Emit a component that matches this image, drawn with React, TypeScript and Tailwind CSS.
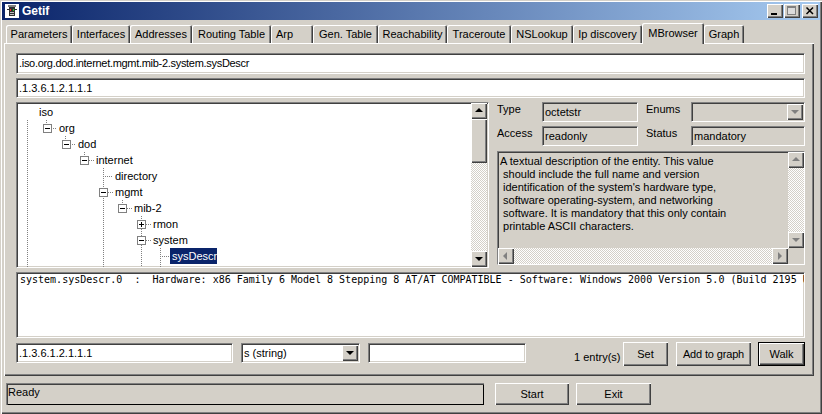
const sunken = "border border-t-[#808080] border-l-[#808080] border-r-white border-b-white shadow-[inset_1px_1px_0_#404040,inset_-1px_-1px_0_#d4d0c8]";
const raised = "shadow-[inset_1px_1px_0_#ffffff,inset_-1px_-1px_0_#404040,inset_-2px_-2px_0_#808080]";
const dither = "bg-[repeating-conic-gradient(#ffffff_0_25%,#d4d0c8_0_50%)] bg-[length:2px_2px]";

const tabs: [string, number][] = [
  ["Parameters", 66], ["Interfaces", 58], ["Addresses", 62], ["Routing Table", 79], ["Arp", 42],
  ["Gen. Table", 65], ["Reachability", 69], ["Traceroute", 64], ["NSLookup", 62], ["Ip discovery", 69],
  ["MBrowser", 62], ["Graph", 40],
];

function Arrow({ dir, gray }: { dir: "up" | "down" | "left" | "right"; gray?: boolean }) {
  const pts = { up: "4,1 0,5 8,5", down: "0,2 8,2 4,6", left: "5,0 5,8 1,4", right: "2,0 2,8 6,4" }[dir];
  return (
    <svg width="8" height="8" viewBox="0 0 8 8">
      <polygon points={pts} fill={gray ? "#808080" : "#000000"} />
    </svg>
  );
}

function ScrollBtn({ dir, gray, className = "" }: { dir: "up" | "down" | "left" | "right"; gray?: boolean; className?: string }) {
  return (
    <div className={`w-4 h-4 shrink-0 bg-[#d4d0c8] flex items-center justify-center ${raised} ${className}`}>
      <Arrow dir={dir} gray={gray} />
    </div>
  );
}

function Box({ sign }: { sign: "+" | "-" }) {
  return (
    <svg width="9" height="9" viewBox="0 0 9 9" className="block shrink-0">
      <rect x="0.5" y="0.5" width="8" height="8" fill="#fff" stroke="#808080" />
      <line x1="2" y1="4.5" x2="7" y2="4.5" stroke="#000" />
      {sign === "+" && <line x1="4.5" y1="2" x2="4.5" y2="7" stroke="#000" />}
    </svg>
  );
}

const nodes: { label: string; x: number; box?: "+" | "-"; sel?: boolean }[] = [
  { label: "iso", x: 21 },
  { label: "org", x: 41, box: "-" },
  { label: "dod", x: 60, box: "-" },
  { label: "internet", x: 78, box: "-" },
  { label: "directory", x: 97 },
  { label: "mgmt", x: 97, box: "-" },
  { label: "mib-2", x: 116, box: "-" },
  { label: "rmon", x: 135, box: "+" },
  { label: "system", x: 135, box: "-" },
  { label: "sysDescr", x: 154, sel: true },
];

function TreeLines() {
  const d = "#808080";
  const v = (x: number, a: number, b: number) => <line key={`v${x}-${a}`} x1={x + 0.5} y1={a} x2={x + 0.5} y2={b} stroke={d} strokeDasharray="1 1" />;
  const h = (a: number, b: number, y: number) => <line key={`h${a}-${y}`} x1={a} y1={y + 0.5} x2={b} y2={y + 0.5} stroke={d} strokeDasharray="1 1" />;
  return (
    <svg width="190" height="164" className="absolute left-0 top-0 pointer-events-none">
      {v(10, 17, 164)}
      {v(29, 17, 21)}{h(34, 39, 25)}
      {v(48, 33, 37)}{h(53, 58, 41)}
      {v(67, 49, 53)}{h(72, 77, 57)}
      {v(86, 65, 164)}{h(86, 96, 73)}{h(91, 96, 89)}
      {v(105, 97, 101)}{h(110, 115, 105)}
      {v(124, 113, 117)}{h(129, 134, 121)}{v(124, 126, 133)}{h(129, 134, 137)}
      {v(124, 142, 164)}
      {v(143, 145, 164)}{h(143, 153, 153)}
    </svg>
  );
}

function Tree() {
  return (
    <div className={`relative w-[473px] h-[166px] shrink-0 bg-white flex overflow-hidden ${sunken}`}>
      <div className="relative flex-1 overflow-hidden pl-px pt-px">
        <TreeLines />
        {nodes.map((n) => (
          <div key={n.label} className="relative h-4 flex items-center" style={{ paddingLeft: n.x }}>
            {n.box && <span className="absolute" style={{ left: n.x - 17 + 1 }}><Box sign={n.box} /></span>}
            <span className={n.sel ? "bg-[#0a246a] text-white px-[2px] h-4 leading-4 -ml-[2px] w-[47px]" : "leading-4"}>{n.label}</span>
          </div>
        ))}
      </div>
      <div className={`w-4 h-full mr-px flex flex-col shrink-0 ${dither}`}>
        <ScrollBtn dir="up" />
        <div className={`w-4 h-[44px] bg-[#d4d0c8] ${raised}`} />
        <div className="flex-1" />
        <ScrollBtn dir="down" />
      </div>
    </div>
  );
}

function Field({ label, value, w }: { label: string; value: string; w: number }) {
  return (
    <div className="flex items-start">
      <span className="leading-4 -mt-px w-[45px]">{label}</span>
      <div className={`h-[20px] px-[2px] leading-[19px] ${sunken}`} style={{ width: w }}>{value}</div>
    </div>
  );
}

const btn = `h-[24px] bg-[#d4d0c8] flex items-center justify-center shrink-0 ${raised}`;

export default function App() {
  return (
    <div className="w-[822px] h-[414px] overflow-hidden bg-[#d4d0c8] text-black text-[11px] flex flex-col pt-[2px] px-[2px] font-['Liberation_Sans',Arial,sans-serif] shadow-[inset_1px_1px_0_#d4d0c8,inset_2px_2px_0_#ffffff,inset_-1px_-1px_0_#404040,inset_-2px_-2px_0_#808080]">
      <div className="h-[18px] shrink-0 flex items-center justify-between bg-[linear-gradient(90deg,#0a246a,#a6caf0)] pl-[3px] pr-[2px]">
        <div className="flex items-center gap-[3px]">
          <svg width="14" height="14" viewBox="0 0 14 14">
            <rect x="0" y="0" width="14" height="14" fill="#ffffff" />
            <rect x="3" y="1" width="8" height="2" fill="#808080" />
            <rect x="4" y="3" width="6" height="9" fill="#303030" />
            <rect x="2" y="5" width="10" height="1" fill="#303030" />
            <rect x="5" y="5" width="1" height="2" fill="#ff2020" />
            <rect x="8" y="5" width="1" height="2" fill="#20d020" />
            <rect x="5" y="8" width="4" height="1" fill="#c0c0c0" />
            <rect x="5" y="10" width="4" height="1" fill="#c0c0c0" />
          </svg>
          <span className="text-white font-bold text-[12px] leading-4">Getif</span>
        </div>
        <div className="flex items-center">
          <div className={`w-4 h-[14px] bg-[#d4d0c8] relative flex items-center justify-center ${raised}`}>
            <svg width="10" height="10" viewBox="0 0 10 10"><rect x="1" y="7" width="6" height="2" fill="#000" /></svg>
          </div>
          <div className={`w-4 h-[14px] ml-px bg-[#d4d0c8] flex items-center justify-center ${raised}`}>
            <svg width="10" height="10" viewBox="0 0 10 10"><rect x="0.5" y="0.5" width="8" height="8" fill="#dcdcdc" stroke="#808080" /><rect x="1" y="1" width="7" height="1" fill="#808080" /></svg>
          </div>
          <div className={`w-4 h-[14px] ml-[2px] bg-[#d4d0c8] flex items-center justify-center ${raised}`}>
            <svg width="10" height="10" viewBox="0 0 10 10"><path d="M1.5 1.5L8 8M8 1.5L1.5 8" stroke="#000" strokeWidth="1.5" /></svg>
          </div>
        </div>
      </div>

      <div className="flex items-end h-[21px] pl-1 mt-[2px] shrink-0 relative z-10">
        {tabs.map(([t, w]) => {
          const active = t === "MBrowser";
          return (
            <div
              key={t}
              className={`shrink-0 bg-[#d4d0c8] rounded-t-[2px] shadow-[inset_1px_1px_0_#ffffff,inset_-1px_0_0_#404040,inset_-2px_0_0_#808080] flex ${t === "Arp" ? "justify-start pl-[5px]" : "justify-center"} ${active ? "h-[21px] leading-[20px] -mb-px" : "h-[18px] leading-[18px]"}`}
              style={{ width: w }}
            >
              {t}
            </div>
          );
        })}
      </div>

      <div className="w-[810px] h-[333px] ml-[2px] shrink-0 pl-[12px] pr-[9px] pt-[10px] flex flex-col shadow-[inset_1px_1px_0_#ffffff,inset_-1px_-1px_0_#404040,inset_-2px_-2px_0_#808080]">
        <div className={`h-[21px] w-[789px] bg-white px-[2px] leading-[19px] tracking-[-0.3px] shrink-0 ${sunken}`}>.iso.org.dod.internet.mgmt.mib-2.system.sysDescr</div>
        <div className={`h-[20px] w-[789px] mt-[4px] bg-white px-[2px] leading-[18px] shrink-0 ${sunken}`}>.1.3.6.1.2.1.1.1</div>
        <div className="flex mt-[4px] shrink-0">
          <Tree />
          <div className="w-[308px] ml-[8px] flex flex-col shrink-0">
            <div className="flex gap-[8px]">
              <Field label="Type" value="octetstr" w={96} />
              <div className="flex items-start">
                <span className="leading-4 -mt-px w-[45px]">Enums</span>
                <div className={`h-[20px] w-[114px] flex justify-end pr-px pt-px ${sunken}`}><ScrollBtn dir="down" gray /></div>
              </div>
            </div>
            <div className="flex gap-[8px] mt-[4px]">
              <Field label="Access" value="readonly" w={96} />
              <Field label="Status" value="mandatory" w={114} />
            </div>
            <div className={`mt-[5px] h-[114px] w-[308px] flex flex-col ${sunken}`}>
              <div className="flex-1 flex min-h-0">
                <div className="flex-1 px-[2px] pt-[3px] leading-[13px] whitespace-pre">{"A textual description of the entity. This value\n should include the full name and version\n identification of the system's hardware type,\n software operating-system, and networking\n software. It is mandatory that this only contain\n printable ASCII characters."}</div>
                <div className={`w-4 flex flex-col ${dither}`}>
                  <ScrollBtn dir="up" gray />
                  <div className="flex-1" />
                  <ScrollBtn dir="down" gray />
                </div>
              </div>
              <div className={`h-4 flex shrink-0 mr-4 ${dither}`}>
                <ScrollBtn dir="left" gray />
                <div className="flex-1" />
                <ScrollBtn dir="right" gray />
              </div>
            </div>
          </div>
        </div>
        <div className={`h-[66px] w-[789px] mt-[4px] bg-white pl-[3px] pt-px overflow-hidden whitespace-pre leading-[12px] text-[10px] shrink-0 font-['DejaVu_Sans_Mono',monospace] ${sunken}`}>system.sysDescr.0  :  Hardware: x86 Family 6 Model 8 Stepping 8 AT/AT COMPATIBLE - Software: Windows 2000 Version 5.0 (Build 2195 U</div>
        <div className="flex items-start mt-[4px] shrink-0">
          <div className={`h-[20px] w-[217px] shrink-0 mt-px bg-white px-[2px] leading-[18px] ${sunken}`}>.1.3.6.1.2.1.1.1</div>
          <div className={`h-[20px] w-[119px] shrink-0 mt-px ml-[8px] bg-white pl-[2px] flex justify-between pr-px pt-px ${sunken}`}>
            <span className="leading-[16px]">s (string)</span>
            <ScrollBtn dir="down" />
          </div>
          <div className={`h-[20px] w-[158px] shrink-0 mt-px ml-[8px] bg-white ${sunken}`} />
          <span className="ml-[48px] w-[49px] shrink-0 mt-[7px] leading-4 whitespace-nowrap">1 entry(s)</span>
          <div className={`${btn} w-[45px]`}>Set</div>
          <div className={`${btn} w-[75px] ml-[8px] tracking-[-0.15px]`}>Add to graph</div>
          <div className={`${btn} w-[47px] ml-[7px] border border-black`}>Walk</div>
        </div>
      </div>

      <div className="flex mt-[7px] ml-[4px] shrink-0">
        <div className="w-[478px] h-[22px] pl-[2px] leading-[18px] shadow-[inset_1px_1px_0_#808080,inset_2px_2px_0_#404040,inset_-1px_-1px_0_#000000]">Ready</div>
        <div className={`${btn} w-[74px] !h-[22px] ml-[11px]`}>Start</div>
        <div className={`${btn} w-[75px] !h-[22px] ml-[7px]`}>Exit</div>
      </div>
    </div>
  );
}
